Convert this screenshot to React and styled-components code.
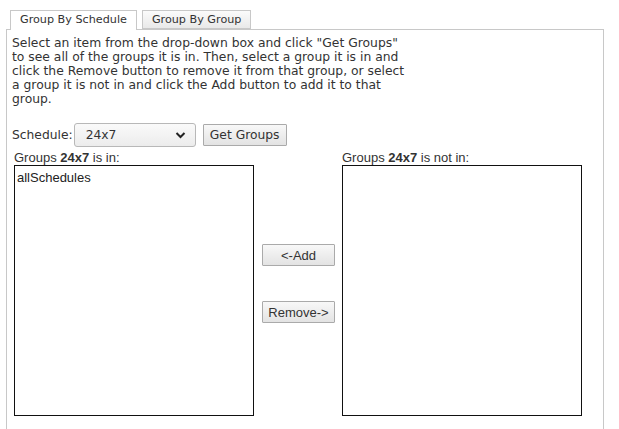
import React from "react";
import styled, { createGlobalStyle } from "styled-components";

const Global = createGlobalStyle`
  html, body {
    margin: 0;
    padding: 0;
    background: #fff;
    font-family: "DejaVu Sans", "Liberation Sans", sans-serif;
    color: #333;
  }
`;

const Page = styled.div`
  padding: 10px 0 0 6px;
  width: 598px;
  height: 419px;
  overflow: hidden;
`;

const TabBar = styled.div`
  display: flex;
  gap: 5px;
  padding-left: 4px;
  height: 19px;
`;

const Tab = styled.div`
  box-sizing: border-box;
  height: ${(p) => (p.$active ? "20px" : "19px")};
  padding: 0 9px;
  border: 1px solid #c8c8c8;
  border-bottom: ${(p) => (p.$active ? "none" : "1px solid #c8c8c8")};
  background: ${(p) => (p.$active ? "#fff" : "linear-gradient(#fbfbfb, #e9e9e9)")};
  font-size: 11.2px;
  line-height: 17px;
  color: #333;
  white-space: nowrap;
  position: relative;
  z-index: 1;
`;

const Panel = styled.div`
  box-sizing: border-box;
  border: 1px solid #c8c8c8;
  border-bottom: none;
  height: 420px;
  padding: 6px 5px;
`;

const Intro = styled.p`
  margin: 0;
  width: 398px;
  font-size: 12.35px;
  line-height: 14px;
  color: #333;
`;

const ScheduleRow = styled.div`
  display: flex;
  align-items: center;
  margin-top: 17px;
  height: 24px;
  font-size: 12.3px;
`;

const Select = styled.div`
  box-sizing: border-box;
  width: 122px;
  height: 24px;
  margin-left: 1px;
  border: 1px solid #b8b8b8;
  border-radius: 3px;
  background: linear-gradient(#fafafa, #ececec);
  display: flex;
  align-items: center;
  justify-content: space-between;
  padding: 0 9px 0 11px;
  font-size: 12.3px;
  color: #333;
`;

const Button = styled.div`
  box-sizing: border-box;
  height: 22px;
  width: ${(p) => p.$width || "auto"};
  padding: 0 4px;
  border: 1px solid #aaa;
  border-radius: 1px;
  background: linear-gradient(#f8f8f8, #e3e3e3);
  display: flex;
  align-items: center;
  justify-content: center;
  white-space: nowrap;
  font-family: ${(p) => (p.$arial ? '"Liberation Sans", Arial, sans-serif' : '"DejaVu Sans", sans-serif')};
  font-size: ${(p) => (p.$arial ? "13px" : "12.3px")};
  color: #333;
`;

const Lists = styled.div`
  display: flex;
  margin-top: 4px;
  padding-left: 2px;
`;

const Column = styled.div`
  display: flex;
  flex-direction: column;
  width: 240px;
`;

const Label = styled.div`
  font-family: "Liberation Sans", Arial, sans-serif;
  font-size: 13px;
  line-height: 14px;
  color: #333;
  b {
    font-weight: bold;
  }
`;

const ListBox = styled.div`
  box-sizing: border-box;
  width: 240px;
  height: 251px;
  border: 1px solid #111;
  padding: 4px 2px;
  font-family: "Liberation Sans", Arial, sans-serif;
  font-size: 13px;
  line-height: 15px;
  color: #222;
`;

const Middle = styled.div`
  width: 88px;
  display: flex;
  flex-direction: column;
  align-items: flex-start;
  padding: 93px 0 0 8px;
  box-sizing: border-box;
  gap: 35px;
`;

function Chevron() {
  return (
    <svg width="11" height="8" viewBox="0 0 11 8">
      <polyline points="1.5,2 5.5,6 9.5,2" fill="none" stroke="#222" strokeWidth="2" />
    </svg>
  );
}

export default function App() {
  return (
    <>
      <Global />
      <Page>
        <TabBar>
          <Tab $active>Group By Schedule</Tab>
          <Tab>Group By Group</Tab>
        </TabBar>
        <Panel>
          <Intro>
            Select an item from the drop-down box and click "Get Groups" to see all of the groups it is in. Then,
            select a group it is in and click the Remove button to remove it from that group, or select a group it is
            not in and click the Add button to add it to that group.
          </Intro>
          <ScheduleRow>
            <span>Schedule:</span>
            <Select>
              <span>24x7</span>
              <Chevron />
            </Select>
            <Button style={{ marginLeft: 7 }} $width="84px">
              Get Groups
            </Button>
          </ScheduleRow>
          <Lists>
            <Column>
              <Label>
                Groups <b>24x7</b> is in:
              </Label>
              <ListBox>allSchedules</ListBox>
            </Column>
            <Middle>
              <Button $arial $width="73px">
                &lt;-Add
              </Button>
              <Button $arial $width="73px">
                Remove-&gt;
              </Button>
            </Middle>
            <Column>
              <Label>
                Groups <b>24x7</b> is not in:
              </Label>
              <ListBox />
            </Column>
          </Lists>
        </Panel>
      </Page>
    </>
  );
}
